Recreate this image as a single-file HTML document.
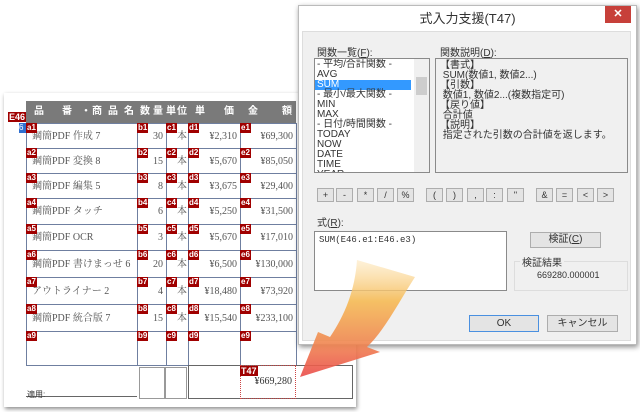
<!DOCTYPE html>
<html><head><meta charset="utf-8"><style>
*{margin:0;padding:0;box-sizing:border-box}
body{width:640px;height:412px;background:#fff;position:relative;overflow:hidden;font-family:"Liberation Sans","Noto Sans CJK JP",sans-serif;font-size:10px;color:#333}
.a{position:absolute}
.doc{left:4px;top:93px;width:352px;height:314px;background:#fff;box-shadow:1px 2px 4px rgba(0,0,0,.45)}
.hdr{left:26px;top:101px;width:270px;height:22px;background:#7a7a7a;color:#fff;font-weight:bold;font-size:10px;line-height:22px;white-space:nowrap}
.hdr span{position:absolute}
.cell{position:absolute;border:1px solid #6f7fa0;background:#fff;font-family:"Liberation Serif","Noto Serif CJK SC",serif;font-size:10px;color:#555}
.tag{position:absolute;background:#a00000;color:#fff;font-size:8px;font-weight:bold;line-height:10px;padding:0 1px;font-family:"Liberation Sans",sans-serif}
.r{text-align:right;padding-right:3px}
.dlg{left:298px;top:5px;width:339px;height:340px;background:#fff;border:1px solid #bbb;box-shadow:1px 2px 5px rgba(0,0,0,.45)}
.inner{left:302px;top:31px;width:329px;height:310px;background:#f0f0f0;border:1px solid #ddd}
.box{background:#fff;border:1px solid #8a8a8a;position:absolute}
.btn{position:absolute;background:#e4e4e4;border:1px solid #adadad;text-align:center;font-size:9px;color:#333}
.op{top:188px;width:17px;height:14px;line-height:12px}
</style></head><body>
<div class="a doc"></div>
<div class="a hdr"><span style="left:8px">品</span><span style="left:36px">番</span><span style="left:55px">・</span><span style="left:66px">商</span><span style="left:82px">品</span><span style="left:98px">名</span><span style="left:114px">数</span><span style="left:127px">量</span><span style="left:140px">単</span><span style="left:151px">位</span><span style="left:169px">単</span><span style="left:198px">価</span><span style="left:222px">金</span><span style="left:256px">額</span></div>
<div class="tag" style="left:8px;top:112px;font-size:9px">E46</div>
<div class="a" style="left:19px;top:123px;width:7px;height:10px;background:#2f6fd0;color:#fff;font-size:8px;line-height:10px">6</div>
<div id="rows"></div>
<script>
const data=[["鋼簡PDF 作成 7","30","¥2,310","¥69,300"],["鋼簡PDF 変換 8","15","¥5,670","¥85,050"],["鋼簡PDF 編集 5","8","¥3,675","¥29,400"],["鋼簡PDF タッチ","6","¥5,250","¥31,500"],["鋼簡PDF OCR","3","¥5,670","¥17,010"],["鋼簡PDF 書けまっせ 6","20","¥6,500","¥130,000"],["アウトライナー 2","4","¥18,480","¥73,920"],["鋼簡PDF 統合版 7","15","¥15,540","¥233,100"],["","","",""]];
const cols=[[26,111],[137,29],[166,22],[188,52],[240,56]];const L="abcde";
let h="";const tops=[123,148,173,198,224,250,277,304,331];
data.forEach((d,i)=>{const t=tops[i],ht=(i==8?34:(tops[i+1]-t));
const txt=[d[0],d[1],d[0]?"本":"",d[2],d[3]];
cols.forEach((c,j)=>{h+=`<div class="cell ${j==0||j==2?'':'r'}" style="left:${c[0]}px;top:${t}px;width:${c[1]+1}px;height:${ht+1}px;line-height:${ht}px;padding-left:${j==0?5:(j==2?10:0)}px">${txt[j]}</div><div class="tag" style="left:${c[0]}px;top:${t}px">${L[j]}${i+1}</div>`;});});
document.getElementById("rows").innerHTML=h;
</script>
<div class="a" style="left:26px;top:396px;width:111px;border-top:1px solid #666"></div>
<div class="a" style="left:27px;top:389px;font-size:8px">適用:</div>
<div class="a" style="left:139px;top:367px;width:26px;height:32px;border:1px solid #999"></div>
<div class="a" style="left:165px;top:367px;width:22px;height:32px;border:1px solid #999"></div>
<div class="a" style="left:188px;top:365px;width:165px;height:34px;border:1px solid #666"></div>
<div class="a" style="left:240px;top:365px;width:56px;height:34px;border:1px dotted #c44;font-family:'Liberation Serif',serif;text-align:right;padding:10px 3px 0 0;font-size:10px">¥669,280</div>
<div class="tag" style="left:240px;top:366px;font-size:9px">T47</div>

<div class="a dlg"></div>
<div class="a" style="left:298px;top:8px;width:339px;text-align:center;font-size:13px;color:#333">式入力支援(T47)</div>
<div class="a" style="left:605px;top:6px;width:26px;height:17px;background:#c7403a;color:#fff;text-align:center;font-weight:bold;font-size:11px;line-height:17px">✕</div>
<div class="a inner"></div>
<div class="a" style="left:317px;top:44px;font-size:10px">関数一覧(<u>F</u>):</div>
<div class="a" style="left:440px;top:44px;font-size:10px">関数説明(<u>D</u>):</div>
<div class="box" style="left:314px;top:58px;width:116px;height:115px;overflow:hidden;font-size:10px;line-height:10px;padding:1px 2px;color:#333">
- 平均/合計関数 -<br>AVG<br><span style="display:block;background:#3399ff;color:#fff;margin:0 16px 0 -2px;padding-left:2px">SUM</span>- 最小/最大関数 -<br>MIN<br>MAX<br>- 日付/時間関数 -<br>TODAY<br>NOW<br>DATE<br>TIME<br>YEAR
<div class="a" style="right:0;top:0;width:15px;height:113px;background:#f0f0f0"></div>
<div class="a" style="right:2px;top:18px;width:11px;height:18px;background:#cdcdcd"></div>
</div>
<div class="box" style="left:435px;top:58px;width:193px;height:115px;background:#f0f0f0;font-size:10px;line-height:10px;padding:2px 4px">【書式】<br>&nbsp;SUM(数値1, 数値2...)<br>【引数】<br>&nbsp;数値1, 数値2...(複数指定可)<br>【戻り値】<br>&nbsp;合計値<br>【説明】<br>&nbsp;指定された引数の合計値を返します。</div>
<div class="btn op" style="left:317px">+</div><div class="btn op" style="left:336px">-</div><div class="btn op" style="left:357px">*</div><div class="btn op" style="left:377px">/</div><div class="btn op" style="left:397px">%</div>
<div class="btn op" style="left:426px">(</div><div class="btn op" style="left:446px">)</div><div class="btn op" style="left:467px">,</div><div class="btn op" style="left:486px">:</div><div class="btn op" style="left:507px">"</div>
<div class="btn op" style="left:536px">&amp;</div><div class="btn op" style="left:556px">=</div><div class="btn op" style="left:577px">&lt;</div><div class="btn op" style="left:597px">&gt;</div>
<div class="a" style="left:317px;top:214px;font-size:10px">式(<u>R</u>):</div>
<div class="box" style="left:314px;top:231px;width:193px;height:60px;font-family:'Liberation Mono',monospace;font-size:9px;padding:3px 4px">SUM(E46.e1:E46.e3)</div>
<div class="btn" style="left:530px;top:232px;width:71px;height:16px;line-height:14px;font-size:10px">検証(<u>C</u>)</div>
<div class="a" style="left:514px;top:261px;width:114px;height:30px;border:1px solid #ddd"></div>
<div class="a" style="left:520px;top:254px;background:#f0f0f0;padding:0 2px;font-size:10px">検証結果</div>
<div class="a" style="left:537px;top:270px;font-size:9px">669280.000001</div>
<div class="btn" style="left:469px;top:315px;width:70px;height:17px;line-height:15px;border-color:#4a90e0;font-size:10px">OK</div>
<div class="btn" style="left:547px;top:315px;width:71px;height:17px;line-height:15px;font-size:10px">キャンセル</div>

<svg class="a" style="left:0;top:0" width="640" height="412" viewBox="0 0 640 412">
<defs><linearGradient id="g" x1="0" y1="260" x2="0" y2="377" gradientUnits="userSpaceOnUse"><stop offset="0" stop-color="#fde6b8" stop-opacity=".6"/><stop offset="0.35" stop-color="#f6bb55"/><stop offset="0.7" stop-color="#f08850"/><stop offset="1" stop-color="#ea4a4a"/></linearGradient></defs>
<path d="M357 260 L415 277 C400 300 385 330 367 347 L380 352 L300 377 L318 332 L330 337 C345 315 355 290 357 260 Z" fill="url(#g)" opacity=".9"/>
</svg>
</body></html>
